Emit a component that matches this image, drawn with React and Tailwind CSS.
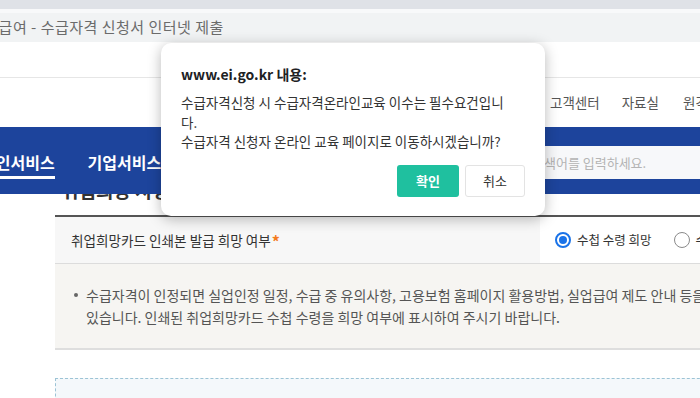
import React from 'react';

const Radio = ({ checked, label }) => (
  <label className="flex items-center gap-[6px]">
    {checked ? (
      <span className="w-[16px] h-[16px] rounded-full border-2 border-[#1a73e8] flex items-center justify-center bg-white">
        <span className="w-[8px] h-[8px] rounded-full bg-[#1a73e8]"></span>
      </span>
    ) : (
      <span className="w-[16px] h-[16px] rounded-full border border-[#8a8a8a] bg-white"></span>
    )}
    <span className="text-[12.5px] text-[#333] whitespace-nowrap">{label}</span>
  </label>
);

const App = () => {
  return (
    <div className="relative w-[700px] h-[398px] overflow-hidden bg-white font-['Noto_Sans_CJK_KR','Noto_Sans',sans-serif]">
      {/* Browser tab strip + title bar */}
      <div className="h-[9px] bg-[#dfe2e7]"></div>
      <div className="h-[4px] bg-[#f8f9fa]"></div>
      <div className="h-[29px] bg-[#f1f3f4] flex items-center text-[15px] tracking-[0.5px] text-[#6b6b6b] whitespace-nowrap">
        <span className="ml-[-30px]">실업급여 - 수급자격 신청서 인터넷 제출</span>
      </div>

      {/* Site header */}
      <div className="h-[36px] border-b border-[#e6e6e6]"></div>
      <div className="h-[49px] flex items-center text-[13.5px] text-[#555] whitespace-nowrap">
        <span className="ml-[550px]">고객센터</span>
        <span className="mx-[11px] w-px h-[18px] bg-[#e2e2e2]"></span>
        <span>자료실</span>
        <span className="ml-[24px]">원격지원</span>
      </div>

      {/* Main nav */}
      <nav className="relative z-10 h-[67px] bg-[#1d449c] flex items-start text-white whitespace-nowrap">
        <div className="ml-[-19px] mt-[25px] pb-[4px] border-b-[3px] border-white text-[16px] leading-[20px] font-bold">
          개인서비스
        </div>
        <div className="ml-[33px] mt-[25px] pb-[4px] border-b-[3px] border-transparent text-[16px] leading-[20px] font-bold">
          기업서비스
        </div>
        <div className="ml-auto mt-[19px] w-[180px] h-[33px] bg-[#f7f8fa] flex items-center pl-[12px] text-[13px] text-[#b4b4b4]">
          검색어를 입력하세요.
        </div>
      </nav>

      {/* Page heading, mostly hidden under the sticky nav */}
      <div className="h-[6px] overflow-hidden ml-[61px]">
        <div className="-translate-y-[15px] text-[19px] leading-[22px] font-bold text-[#333] whitespace-nowrap">취업희망 사항</div>
      </div>

      {/* Form rows */}
      <div className="ml-[55px] mt-[15px] w-[700px]">
        <div className="border-t-2 border-[#555] flex h-[49px] border-b border-b-[#dcdcdc]">
          <div className="w-[485px] shrink-0 bg-[#f7f7f7] flex items-center pl-[16px] text-[13.6px] text-[#333] whitespace-nowrap">
            취업희망카드 인쇄본 발급 희망 여부
            <span className="text-[#f47b20] text-[16px] font-bold leading-none ml-[1px] mt-[2px]">*</span>
          </div>
          <div className="flex items-center pl-[15px] gap-[22px] shrink-0">
            <Radio checked label="수첩 수령 희망" />
            <Radio label="수령 희망 안함" />
          </div>
        </div>

        <div className="bg-[#f6f5f2] border-b-2 border-[#dedede] pt-[20px] pb-[20px] pl-[19px] flex items-start text-[14px] leading-[22px] text-[#555] whitespace-nowrap">
          <span className="mt-[9px] w-[4px] h-[4px] rounded-full bg-[#666] shrink-0"></span>
          <p className="ml-[8px]">
            수급자격이 인정되면 실업인정 일정, 수급 중 유의사항, 고용보험 홈페이지 활용방법, 실업급여 제도 안내 등을 안내받을 수
            <br />
            있습니다. 인쇄된 취업희망카드 수첩 수령을 희망 여부에 표시하여 주시기 바랍니다.
          </p>
        </div>

        <div className="mt-[28px] h-[60px] border border-dashed border-[#9cc3d5] bg-[#f4f8fb]"></div>
      </div>

      {/* Browser alert dialog */}
      <div className="absolute z-20 left-[161px] top-[43px] w-[384px] h-[173px] bg-white rounded-[10px] shadow-[0_3px_14px_rgba(0,0,0,0.28)] pl-[20px] pr-[20px]">
        <div className="pt-[21px] text-[14px] leading-[20px] font-bold text-[#202124]">www.ei.go.kr 내용:</div>
        <p className="mt-[9px] text-[13.5px] leading-[19.5px] text-[#333]">
          수급자격신청 시 수급자격온라인교육 이수는 필수요건입니
          <br />
          다.
          <br />
          수급자격 신청자 온라인 교육 페이지로 이동하시겠습니까?
        </p>
        <div className="mt-[13px] flex justify-end gap-[6px]">
          <button className="w-[62px] h-[32px] rounded-[3px] bg-[#1fc09f] text-white text-[13px] font-bold">확인</button>
          <button className="w-[60px] h-[32px] rounded-[3px] bg-white border border-[#e3e3e3] text-[#333] text-[13px]">취소</button>
        </div>
      </div>
    </div>
  );
};

export default App;
